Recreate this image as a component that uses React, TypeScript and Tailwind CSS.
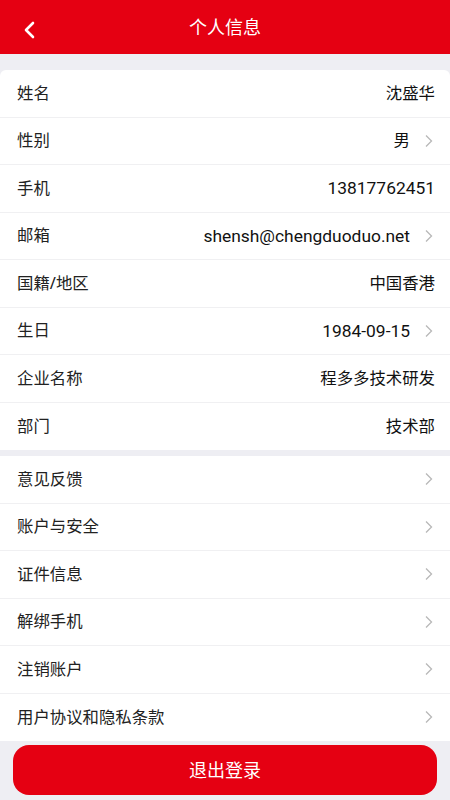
import React from "react";

const font = { fontFamily: '"Noto Sans", "Noto Sans CJK SC", sans-serif' };
const latin = { fontFamily: 'Roboto, "Noto Sans CJK SC", sans-serif' };

function Chevron() {
  return (
    <svg width="10" height="14" viewBox="0 0 10 14" className="ml-[14px] mr-[1px]">
      <path d="M2 1.5 L7.5 7 L2 12.5" fill="none" stroke="#b8b8b8" strokeWidth="1.3" />
    </svg>
  );
}

function Row({ label, value, arrow, last }: { label: string; value?: string; arrow?: boolean; last?: boolean }) {
  const isLatin = value ? /^[\x00-\x7f]+$/.test(value) : false;
  return (
    <div className={`flex h-[47.5px] items-center justify-between pl-[17px] pr-[15px] ${last ? "" : "border-b border-[#f0f0f2]"}`}>
      <span className="text-[16.4px] text-[#222]">{label}</span>
      <div className="flex items-center">
        {value &&
          (isLatin ? (
            <span className="text-[17.4px] text-[#111]" style={latin}>{value}</span>
          ) : (
            <span className="text-[16.4px] text-[#111]">{value}</span>
          ))}
        {arrow && <Chevron />}
      </div>
    </div>
  );
}

export default function App() {
  const info = [
    { label: "姓名", value: "沈盛华" },
    { label: "性别", value: "男", arrow: true },
    { label: "手机", value: "13817762451" },
    { label: "邮箱", value: "shensh@chengduoduo.net", arrow: true },
    { label: "国籍/地区", value: "中国香港" },
    { label: "生日", value: "1984-09-15", arrow: true },
    { label: "企业名称", value: "程多多技术研发" },
    { label: "部门", value: "技术部" },
  ];
  const more = ["意见反馈", "账户与安全", "证件信息", "解绑手机", "注销账户", "用户协议和隐私条款"];
  return (
    <div className="flex h-[800px] w-[450px] flex-col bg-[#eeeef3]" style={font}>
      <div className="relative flex h-[54px] items-center justify-center bg-[#e50012]">
        <svg width="14" height="20" viewBox="0 0 14 20" className="absolute left-[23px] top-[21px]">
          <path d="M10 2 L3 9 L10 16" fill="none" stroke="#fff" strokeWidth="2.6" strokeLinecap="round" strokeLinejoin="round" />
        </svg>
        <span className="text-[18px] text-white">个人信息</span>
      </div>
      <div className="mt-[16px] rounded-t-[6px] bg-white">
        {info.map((r, i) => (
          <Row key={r.label} {...r} last={i === info.length - 1} />
        ))}
      </div>
      <div className="mt-[6px] bg-white">
        {more.map((l, i) => (
          <Row key={l} label={l} arrow last={i === more.length - 1} />
        ))}
      </div>
      <div className="mx-[13px] mt-[4px] flex h-[50px] items-center justify-center rounded-[16px] bg-[#e50012]">
        <span className="text-[18px] text-white">退出登录</span>
      </div>
    </div>
  );
}
